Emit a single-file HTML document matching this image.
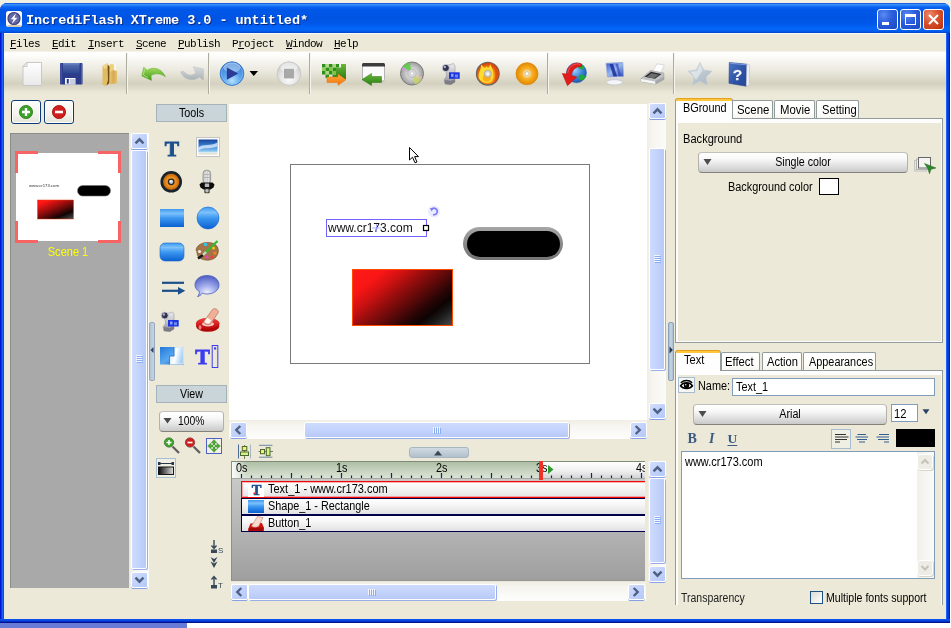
<!DOCTYPE html>
<html><head><meta charset="utf-8"><title>IncrediFlash XTreme 3.0 - untitled*</title>
<style>
*{box-sizing:border-box;margin:0;padding:0}
html,body{width:951px;height:628px;overflow:hidden;background:#fff}
body{position:relative;font-family:"Liberation Sans",sans-serif;font-size:11px;color:#000;line-height:1}
.a{position:absolute}
.t{position:absolute;white-space:nowrap;line-height:14px;height:14px;font-size:12.5px;transform:scaleX(.865);transform-origin:0 0}
.c{position:absolute;white-space:nowrap;line-height:14px;height:14px;font-size:12.5px;transform:scaleX(.865);transform-origin:50% 0;text-align:center}
.mono{font-family:"Liberation Mono",monospace}
svg{position:absolute;overflow:visible}
.trk{position:absolute;background:#f5f4ef}
.sbb{position:absolute;width:17px;height:16px;border:1px solid #fff;border-radius:2px;background:linear-gradient(135deg,#d3defd 0,#c2d2fb 50%,#b5c8f6 100%);box-shadow:0 1px 0 #86a2e4}
.thv{position:absolute;width:16px;border:1px solid #fff;border-radius:2px;background:linear-gradient(90deg,#cddbfd 0,#c3d3fc 50%,#b7c9f6 100%);box-shadow:1px 1px 0 #9aaeea}
.thh{position:absolute;height:16px;border:1px solid #fff;border-radius:2px;background:linear-gradient(180deg,#cddbfd 0,#c3d3fc 50%,#b7c9f6 100%);box-shadow:1px 1px 0 #9aaeea}
.hdr{position:absolute;background:#c9d5d9;border:1px solid #a4b3b9}
.btn{position:absolute;border-radius:4px;border:1px solid #b2b1ab;border-bottom-color:#85817c;border-top-color:#c0bfba;background:linear-gradient(180deg,#ffffff 0,#f9f9f9 30%,#e6e6e6 60%,#c9c9c9 100%)}
.tab{position:absolute;border:1px solid #919b9c;border-bottom:none;border-radius:2px 2px 0 0;background:linear-gradient(180deg,#ffffff 0,#fdfdfb 70%,#f6f5f0 100%)}
.tabsel{position:absolute;border:1px solid #919b9c;border-top:1px solid #e5a01e;border-bottom:none;border-radius:3px 3px 0 0;background:linear-gradient(180deg,#ffc83c 0,#ffc83c 2px,#fefefe 2px)}
.pane{position:absolute;border:1px solid #919b9c;background:#ece9d8;box-shadow:inset 2px 4px 0 #fdfdfd,inset -1px -1px 0 #fdfdfd}
.inp{position:absolute;background:#fff;border:1px solid #7f9db9;font-size:11px}
.sep{position:absolute;width:2px;top:53px;height:41px;border-left:1px solid #aeab9f;border-right:1px solid #f6f5ef}
.row{position:absolute;left:241px;width:420px;height:17px;border:1px solid #00004a;background:linear-gradient(180deg,#ffffff 0,#f6f6f6 40%,#e2e2e4 100%)}
.mi{top:37px;font-size:11px;letter-spacing:-0.6px;text-underline-offset:1px;transform:none;font-family:"Liberation Mono",monospace}
</style></head><body><div id="app" style="position:absolute;left:0;top:0;width:951px;height:628px;will-change:transform">
<!-- backdrop -->
<div class="a" style="left:0;top:0;width:951px;height:12px;background:#f0efe3"></div>
<div class="a" style="left:0;top:623px;width:187px;height:5px;background:#677bd7"></div>
<!-- window frame -->
<div class="a" style="left:0;top:3px;width:950px;height:620px;border-radius:7px 7px 0 0;background:linear-gradient(90deg,#0019cf 0,#0019cf 1px,#0a3cd8 1px,#0a3cd8 2px,#1e62f8 2px,#1e62f8 3px,#0050e0 3px,#0050e0 946px,#1e62f8 946px,#1e62f8 947px,#0a3cd8 947px,#0a3cd8 949px,#0019cf 949px)"></div>
<div class="a" style="left:0;top:619px;width:950px;height:4px;background:linear-gradient(180deg,#0a50ec 0,#0a50ec 1px,#0a46e0 1px,#0a46e0 2px,#0430c8 2px,#0430c8 3px,#00128e 3px)"></div>
<div class="a" style="left:4px;top:33px;width:942px;height:586px;background:#ece9d8"></div>
<!-- title bar -->
<div class="a" style="left:0;top:3px;width:950px;height:30px;border-radius:7px 7px 0 0;background:linear-gradient(180deg,#0845d3 0,#3a90fb 5%,#0a64f2 13%,#0058e8 22%,#0054e3 50%,#0058ea 70%,#0366f8 85%,#0261f2 93%,#0044c8 100%)"></div>
<svg style="left:6px;top:11px" width="16" height="16" viewBox="0 0 16 16"><rect x="0" y="0" width="16" height="16" rx="2.5" fill="#fbfbfb"/><rect x="1" y="14" width="14" height="2" rx="1" fill="#d8c8b0"/><circle cx="8" cy="7.5" r="6" fill="#6468a8"/><circle cx="8" cy="7.5" r="6" fill="none" stroke="#3c4078" stroke-width="1.2"/><path d="M10 2.300 L4.800 8.200 L7.600 8.200 L5.800 13 L11.400 6.800 L8.500 6.800 Z" fill="#fff"/></svg>
<div class="t mono" style="transform:none;left:26px;top:14px;font-size:13.6px;font-weight:bold;color:#fff;letter-spacing:-0.1px;text-shadow:1px 1px 0 #0a2a80">IncrediFlash XTreme 3.0 - untitled*</div>
<!-- caption buttons -->
<div class="a" style="left:877px;top:9px;width:21px;height:21px;border:1px solid #fff;border-radius:3px;background:radial-gradient(circle at 30% 25%,#5a8af0 0,#2a5cdc 45%,#1c48c0 100%)"></div>
<div class="a" style="left:882px;top:22px;width:7px;height:3px;background:#fff"></div>
<div class="a" style="left:900px;top:9px;width:21px;height:21px;border:1px solid #fff;border-radius:3px;background:radial-gradient(circle at 30% 25%,#5a8af0 0,#2a5cdc 45%,#1c48c0 100%)"></div>
<div class="a" style="left:905px;top:14px;width:11px;height:11px;border:1px solid #fff;border-top:3px solid #fff"></div>
<div class="a" style="left:923px;top:9px;width:21px;height:21px;border:1px solid #fff;border-radius:3px;background:radial-gradient(circle at 30% 25%,#ec8a6c 0,#d8502c 45%,#b8300c 100%)"></div>
<svg style="left:923px;top:9px" width="21" height="21" viewBox="0 0 21 21"><path d="M6 6 L15 15 M15 6 L6 15" stroke="#fff" stroke-width="2" stroke-linecap="butt"/></svg>
<!-- menu -->
<div class="a" style="left:4px;top:33px;width:942px;height:19px;background:#ece9d8"></div>
<div class="a" style="left:4px;top:33px;width:942px;height:1px;background:#fbfaf5"></div>
<div class="t mono mi" style="left:10px"><u>F</u>iles</div>
<div class="t mono mi" style="left:52px"><u>E</u>dit</div>
<div class="t mono mi" style="left:88px"><u>I</u>nsert</div>
<div class="t mono mi" style="left:136px"><u>S</u>cene</div>
<div class="t mono mi" style="left:178px"><u>P</u>ublish</div>
<div class="t mono mi" style="left:232px">P<u>r</u>oject</div>
<div class="t mono mi" style="left:286px"><u>W</u>indow</div>
<div class="t mono mi" style="left:334px"><u>H</u>elp</div>
<!-- toolbar bg -->
<div class="a" style="left:4px;top:51px;width:942px;height:1px;background:#f4f2e8"></div>
<div class="a" style="left:4px;top:52px;width:942px;height:42px;background:linear-gradient(180deg,#ffffff 0,#fdfdfb 8%,#f4f3ed 25%,#e9e7dc 48%,#dcd9c9 65%,#d5d1c0 75%,#dedbca 86%,#e8e5d4 94%,#ece9d8 100%)"></div>
<div class="sep" style="left:126px"></div>
<div class="sep" style="left:208px"></div>
<div class="sep" style="left:309px"></div>
<div class="sep" style="left:547px"></div>
<div class="sep" style="left:673px"></div>
<!-- toolbar icons -->
<svg style="left:0;top:0" width="951" height="100" viewBox="0 0 951 100">
<defs>
<linearGradient id="gPaper" x1="0" y1="0" x2="0" y2="1"><stop offset="0" stop-color="#ffffff"/><stop offset="1" stop-color="#e9e9e9"/></linearGradient>
<linearGradient id="gSave" x1="0" y1="0" x2="0" y2="1"><stop offset="0" stop-color="#5a72b4"/><stop offset="1" stop-color="#2c4690"/></linearGradient>
<linearGradient id="gFold" x1="0" y1="0" x2="1" y2="0"><stop offset="0" stop-color="#e8c878"/><stop offset="0.5" stop-color="#d8aa50"/><stop offset="1" stop-color="#e4c070"/></linearGradient>
<linearGradient id="gUndo" x1="0" y1="0" x2="0" y2="1"><stop offset="0" stop-color="#a8e060"/><stop offset="1" stop-color="#3c9818"/></linearGradient>
<linearGradient id="gRedo" x1="0" y1="0" x2="0" y2="1"><stop offset="0" stop-color="#d8dcde"/><stop offset="1" stop-color="#aab0b4"/></linearGradient>
<radialGradient id="gPlay" cx="0.5" cy="0.8" r="0.8"><stop offset="0" stop-color="#b4e2ff"/><stop offset="0.45" stop-color="#5ca6ee"/><stop offset="1" stop-color="#3272cc"/></radialGradient>
<radialGradient id="gStop" cx="0.5" cy="0.75" r="0.75"><stop offset="0" stop-color="#fafafa"/><stop offset="0.6" stop-color="#e0e0e0"/><stop offset="1" stop-color="#c6c6c6"/></radialGradient>
<linearGradient id="gOr" x1="0" y1="0" x2="0" y2="1"><stop offset="0" stop-color="#ffb040"/><stop offset="1" stop-color="#f07008"/></linearGradient>
<linearGradient id="gGr" x1="0" y1="0" x2="0" y2="1"><stop offset="0" stop-color="#68b838"/><stop offset="1" stop-color="#2c7c14"/></linearGradient>
<radialGradient id="gCD" cx="0.5" cy="0.5" r="0.5"><stop offset="0.2" stop-color="#e8e8e8"/><stop offset="0.6" stop-color="#c4c4c4"/><stop offset="1" stop-color="#9c9c9c"/></radialGradient>
<radialGradient id="gGold" cx="0.5" cy="0.5" r="0.5"><stop offset="0.3" stop-color="#fcc040"/><stop offset="0.7" stop-color="#f2a010"/><stop offset="1" stop-color="#e08808"/></radialGradient>
<radialGradient id="gFire" cx="0.5" cy="0.6" r="0.6"><stop offset="0" stop-color="#ffe040"/><stop offset="0.6" stop-color="#f88010"/><stop offset="1" stop-color="#c83808"/></radialGradient>
<radialGradient id="gGlobe" cx="0.4" cy="0.35" r="0.7"><stop offset="0" stop-color="#a0d8ff"/><stop offset="0.6" stop-color="#3a80d8"/><stop offset="1" stop-color="#1c50a8"/></radialGradient>
<linearGradient id="gMon" x1="0" y1="0" x2="1" y2="1"><stop offset="0" stop-color="#3858d0"/><stop offset="0.5" stop-color="#98b8f0"/><stop offset="1" stop-color="#2848b8"/></linearGradient>
<linearGradient id="gCam" x1="0" y1="0" x2="0" y2="1"><stop offset="0" stop-color="#ececf0"/><stop offset="0.6" stop-color="#b8b8c0"/><stop offset="1" stop-color="#84848c"/></linearGradient>
<linearGradient id="gHelp" x1="0" y1="0" x2="1" y2="1"><stop offset="0" stop-color="#4c74c4"/><stop offset="0.6" stop-color="#2c50a4"/><stop offset="1" stop-color="#244494"/></linearGradient>
<linearGradient id="gStar" x1="0" y1="0" x2="0.6" y2="1"><stop offset="0" stop-color="#e0e8ec"/><stop offset="0.5" stop-color="#c0ccd4"/><stop offset="1" stop-color="#b0bcc6"/></linearGradient>
</defs>
<!-- new -->
<path d="M27 62.5 H41.5 V85.5 H23 V66.5 Z" fill="url(#gPaper)" stroke="#c8c8c8" stroke-width="1"/>
<path d="M23 66.5 H27 V62.5 Z" fill="#f4f4f4" stroke="#bdbdbd" stroke-width="0.8"/>
<!-- save -->
<rect x="60" y="63" width="22.500" height="21.500" rx="1" fill="#2c3c8a"/>
<rect x="63" y="63" width="16.500" height="10.500" fill="url(#gSave)"/>
<rect x="63" y="63" width="16.500" height="1.500" fill="#6c84c4"/>
<rect x="60.500" y="63.500" width="1.200" height="20" fill="#4a5ea8"/>
<rect x="81" y="63.500" width="1.200" height="20" fill="#4a5ea8"/>
<rect x="65" y="78" width="10.500" height="6.500" fill="#f2f3f6"/>
<rect x="70" y="79" width="5" height="5.500" fill="#c8cee0"/>
<rect x="66.800" y="79" width="2" height="4.500" fill="#2c3c8a"/>
<!-- folder -->
<path d="M102.500 66 L107.500 63.200 L109 66 L109 82.500 L105.500 86 L102.500 84.500 Z" fill="#e2bc62"/>
<path d="M102.500 66 L107.500 63.200 L108 67 L104.500 69 Z" fill="#f0d48c"/>
<path d="M107.600 65 L109.800 66.500 L109.500 83 L106.500 85.500 L108 80 Z" fill="#6e4e16"/>
<path d="M109.800 64.500 L117 66 L117 83 L109.500 84.500 Z" fill="url(#gFold)"/>
<path d="M113.500 64.300 L116.800 65 L116.800 71 L113.500 70 Z" fill="#fbf7ea"/>
<path d="M109.800 64.500 L113.500 64 L113.500 70 L109.800 72 Z" fill="#ecd07c"/>
<!-- undo -->
<path d="M141.800 75.900 L143.700 67.200 L147.300 70.300 C153 66.300 161.800 68.300 165.400 76.800 C160.500 73.200 155 73 151 75.700 L151.600 80.500 Z" fill="url(#gUndo)" stroke="#62ac30" stroke-width="0.500"/>
<path d="M144.500 69.500 L143.300 75 L148 77.500" fill="none" stroke="#c8f090" stroke-width="0.800" opacity=".8"/>
<!-- redo -->
<path d="M180.500 72 C183 70.300 184.300 72 186.200 73.600 C189 76 193 75.500 195.800 72.800 L193.300 66.800 L203.500 69 L203.500 80.200 L199.300 77.200 C194 81.500 184.500 81 180.500 72 Z" fill="url(#gRedo)" stroke="#b8bec2" stroke-width="0.500"/>
<!-- play -->
<circle cx="232" cy="73.600" r="11.800" fill="url(#gPlay)" stroke="#3c78cc" stroke-width="1"/><circle cx="232" cy="73.600" r="10.600" fill="none" stroke="#8cc4f8" stroke-width="0.800" opacity=".7"/>
<ellipse cx="232" cy="67.500" rx="8.500" ry="5" fill="#fff" opacity=".35"/>
<path d="M226.800 67.500 L238.300 73.600 L226.800 79.700 Z" fill="#2c3a98"/>
<path d="M249.500 71 H258 L253.750 76 Z" fill="#000"/>
<!-- stop -->
<circle cx="289" cy="73.600" r="11.800" fill="url(#gStop)" stroke="#c8c8c8" stroke-width="1"/>
<ellipse cx="289" cy="67.500" rx="8.500" ry="5" fill="#fff" opacity=".5"/>
<rect x="284" y="68.800" width="10" height="9.600" fill="#a8a8a8"/>
<!-- export -->
<g fill="#2f8f1d"><rect x="322" y="64" width="3.500" height="3.500"/><rect x="329" y="64" width="3.500" height="3.500"/><rect x="325.500" y="67.500" width="3.500" height="3.500"/><rect x="322" y="71" width="3.500" height="3.500"/><rect x="329" y="71" width="3.500" height="3.500"/><rect x="325.500" y="74.500" width="3.500" height="3.500"/><rect x="332.500" y="67.500" width="3.500" height="3.500"/><rect x="336" y="64" width="3" height="3.500"/><rect x="332.500" y="74.500" width="4" height="3.500"/></g>
<g fill="#7cc83c"><rect x="325.500" y="64" width="3.500" height="3.500" opacity=".55"/><rect x="322" y="67.500" width="3.500" height="3.500" opacity=".8"/><rect x="329" y="67.500" width="3.500" height="3.500"/><rect x="325.500" y="71" width="3.500" height="3.500" opacity=".5"/><rect x="332.500" y="71" width="3.500" height="3.500"/><rect x="332.500" y="64" width="3.500" height="3.500" opacity=".6"/></g>
<path d="M336 67.500 H341 V64 H346 V79 H336 Z" fill="url(#gGr)"/>
<path d="M327 77 H338 V74 L346 79.700 L338 85.300 V82.500 H327 Z" fill="url(#gOr)" stroke="#e07010" stroke-width="0.500"/>
<!-- window import -->
<rect x="362.500" y="63.500" width="22" height="17.500" rx="1.500" fill="#fbfbfb" stroke="#b4b4b4" stroke-width="1"/>
<path d="M362 66.500 V64.500 Q362 63 363.500 63 H383.500 Q385 63 385 64.500 V66.500 Z" fill="#3c3c3c"/>
<path d="M381.500 76.500 H371.500 V73.500 L362 79.500 L371.500 85.500 V82.500 H381.500 Z" fill="url(#gGr)" stroke="#2c7414" stroke-width="0.500"/>
<!-- cd -->
<circle cx="412" cy="73.500" r="11.500" fill="url(#gCD)" stroke="#7c7c7c" stroke-width="1"/>
<path d="M412 73.500 L403 66.500 A11.500 11.500 0 0 1 409.500 62.300 Z" fill="#58d040" opacity=".85"/>
<path d="M412 73.500 L401.500 70 A11.500 11.500 0 0 1 403 66.500 Z" fill="#c8a0d8" opacity=".6"/>
<path d="M412 73.500 L421 80.500 A11.500 11.500 0 0 1 415 84.600 Z" fill="#c8d860" opacity=".8"/>
<path d="M412 73.500 L422.500 77 A11.500 11.500 0 0 1 421 80.500 Z" fill="#e8c8a0" opacity=".6"/>
<circle cx="412" cy="73.500" r="4.200" fill="#d8d8d8" stroke="#a4a4a4" stroke-width="0.600"/>
<circle cx="412" cy="73.500" r="1.700" fill="#f6f6f6" stroke="#b0b0b0" stroke-width="0.400"/>
<!-- camera -->
<path d="M447 65.500 L453.500 63.500 L455 66 L455 82 L451 84.500 L445 84 L444 80 L446.500 76 L446 71 Z" fill="url(#gCam)" stroke="#8c8c94" stroke-width="0.500"/>
<path d="M445 80 L451 81 L454.500 79 L455 82 L451 84.500 L445 84 Z" fill="#7c7c84"/>
<circle cx="445.800" cy="68" r="3.600" fill="#34344c" stroke="#d0d0d8" stroke-width="0.900"/>
<circle cx="444.800" cy="67" r="1.200" fill="#a8b0d8"/>
<rect x="449" y="72.300" width="10.700" height="6.500" fill="#1c34e0"/>
<rect x="451" y="73.800" width="2.500" height="3" fill="#8ca4fc"/><rect x="455" y="74.500" width="3" height="3" fill="#6c88f4"/>
<!-- fire cd -->
<circle cx="487.800" cy="73.700" r="11.300" fill="url(#gFire)" stroke="#6c6460" stroke-width="1.300"/>
<path d="M487.800 62.400 A11.300 11.300 0 0 1 499.100 73.700 A11.300 11.300 0 0 1 493 83.700 C496 79 496 72 493.500 66.500 C492.500 69 491 70 490.500 67.500 C489.500 65.500 488.500 64 487.800 62.400 Z" fill="#d84810" opacity=".75"/>
<path d="M479 78.500 C477.500 73 481.500 70 481 64.500 C484 67 485 69.500 486.500 66 C488 68.500 489.500 68 490 64 C493.500 69 494.500 76 492 81 C488 84.500 482.500 83.500 479 78.500 Z" fill="#ffe030" opacity=".95"/>
<path d="M483 80 C482 76 485 74 485.500 70.500 C487.500 73 489 73 490 70.500 C492 74.500 491.500 79 489 81.500 C487 82.500 484.500 82 483 80 Z" fill="#ffa018" opacity=".8"/>
<circle cx="487.800" cy="73.700" r="3.600" fill="#d4d0cc" stroke="#a09488" stroke-width="0.600"/>
<circle cx="487.800" cy="73.700" r="1.500" fill="#f8f8f8"/>
<!-- gold cd -->
<circle cx="527" cy="73.700" r="11" fill="url(#gGold)" stroke="#dc8c10" stroke-width="0.800"/>
<circle cx="527" cy="73.700" r="4.600" fill="#f8d488" stroke="#eeb040" stroke-width="0.800"/>
<circle cx="527" cy="73.700" r="2" fill="#fdfdf8" stroke="#b8b0a0" stroke-width="0.600"/>
<!-- globe -->
<circle cx="576.500" cy="72.800" r="10" fill="url(#gGlobe)" stroke="#2c58a8" stroke-width="0.500"/>
<path d="M578 64.500 C581 63.500 584 65.500 584.500 68 C582.500 70 580 69.500 578.500 68 Z M579 75 C582 73.500 585.500 75 585 78 C583 81.500 580 80.500 578.500 78.500 Z" fill="#20a838"/>
<path d="M581.500 64 C575 61 567 65.500 566.500 74 L562.300 73.500 L567.500 85.700 L576.800 77 L571.500 75.500 C572 69.500 576.500 66 581.500 66.500 Z" fill="#e01c1c" stroke="#b41010" stroke-width="0.500"/>
<path d="M580 64.300 C574.500 62.500 568.500 66.500 567.800 73" fill="none" stroke="#f87878" stroke-width="0.800" opacity=".8"/>
<!-- monitor -->
<path d="M606 63.300 L622.800 62.500 L623.500 76.500 L607.500 77 Z" fill="url(#gMon)" stroke="#98a8d8" stroke-width="0.800"/>
<path d="M609.500 64 L613 64 L617 76.300 L613.500 76.500 Z" fill="#1c2c9c" opacity=".85"/>
<path d="M615.500 63.800 L618 63.700 L621 76 L618.800 76.200 Z" fill="#2c3cac" opacity=".6"/>
<path d="M612 77.500 L619 77.200 L620 80.500 L611.500 81 Z" fill="#d4d8e0"/>
<ellipse cx="614.500" cy="82.300" rx="8" ry="2.600" fill="#f4f5f8" stroke="#b8bcc8" stroke-width="0.600"/>
<!-- printer -->
<path d="M652.500 71.500 L657 63.800 L664.300 65 L660.500 73.500 Z" fill="#fdfdfd" stroke="#c8c8c8" stroke-width="0.600"/>
<path d="M641 78.500 L650.500 70.500 L663.800 73 L664 79.500 L655.500 84 L641 81.500 Z" fill="#c0c2c4" stroke="#909294" stroke-width="0.500"/>
<path d="M644.500 76.800 L651 71.800 L661.500 74 L655 78.800 Z" fill="#2c2c2c"/>
<path d="M646.500 77 L651.500 73.300 L659 74.800 L654 78.300 Z" fill="#6c6c6c"/>
<path d="M641 79 L655 81.500 L655.500 84 L641 81.500 Z" fill="#f6f6f6"/>
<path d="M655.500 81 L664 76.500 L664 79.500 L655.500 84 Z" fill="#a4a6a8"/>
<!-- star -->
<path d="M700 62.500 L703.600 70 L712 71.200 L706 77 L707.500 85.300 L700 81.300 L692.500 85.300 L694 77 L688 71.200 L696.400 70 Z" fill="url(#gStar)" stroke="#c4ced6" stroke-width="0.800" stroke-linejoin="round"/>
<path d="M700 64.500 L702.500 70.500 L696 80 L694.500 77.500 L691 72 L697.300 71 Z" fill="#fff" opacity=".45"/>
<!-- help -->
<path d="M729.300 62.500 L746.800 64.200 L746.300 86.200 L729 83.300 Z" fill="url(#gHelp)" stroke="#28448c" stroke-width="0.600"/>
<path d="M729.800 63.200 L746.300 64.800" stroke="#7c9ce0" stroke-width="1"/>
<path d="M746.800 64.200 L749.600 65 L749.200 85.200 L746.300 86.200 Z" fill="#eef0f6" stroke="#b0b8cc" stroke-width="0.500"/>
<text x="737.500" y="80.200" font-family="Liberation Sans, sans-serif" font-weight="bold" font-size="15.500" fill="#fff" text-anchor="middle" stroke="#d8dcec" stroke-width="0.300">?</text>
</svg>
<!-- add / remove scene buttons -->
<div class="a" style="left:11px;top:100px;width:30px;height:24px;border:1px solid #0c3c78;border-radius:3px;background:linear-gradient(180deg,#fdfdfc 0,#f3f2ec 60%,#e6e4da 100%);box-shadow:inset 0 0 0 1px #fff"></div>
<div class="a" style="left:44px;top:100px;width:30px;height:24px;border:1px solid #0c3c78;border-radius:3px;background:linear-gradient(180deg,#fdfdfc 0,#f3f2ec 60%,#e6e4da 100%);box-shadow:inset 0 0 0 1px #fff"></div>
<svg style="left:0;top:96px" width="90" height="32" viewBox="0 96 90 32">
<circle cx="26" cy="112" r="6.600" fill="#3aa028" stroke="#2c7c1c" stroke-width="0.800"/>
<path d="M22 112 H30 M26 108 V116" stroke="#fff" stroke-width="2.400"/>
<circle cx="59" cy="112" r="6.600" fill="#d01c1c" stroke="#a01010" stroke-width="0.800"/>
<path d="M55 112 H63" stroke="#fff" stroke-width="2.600"/>
</svg>
<!-- scene list -->
<div class="a" style="left:10px;top:133px;width:119px;height:455px;background:#a9a9a9;border-left:1px solid #8c8c8c;border-top:1px solid #8c8c8c"></div>
<div class="a" style="left:16px;top:153px;width:104px;height:88px;background:#fff"></div>
<svg style="left:15px;top:151px" width="106" height="92" viewBox="0 0 106 92">
<path d="M1.500 22 V1.500 H23 M83 1.500 H104.500 V22 M104.500 70 V90.500 H83 M23 90.500 H1.500 V70" fill="none" stroke="#f86464" stroke-width="3"/>
<rect x="62.500" y="34.500" width="33" height="10.500" rx="5.200" fill="#000" stroke="#707070" stroke-width="0.600"/>
<defs><linearGradient id="gThumb" x1="0.1" y1="0" x2="0.9" y2="1"><stop offset="0.1" stop-color="#ff1616"/><stop offset="0.45" stop-color="#900c0c"/><stop offset="0.78" stop-color="#120404"/><stop offset="1" stop-color="#444444"/></linearGradient></defs>
<rect x="22.500" y="49" width="36" height="19" fill="url(#gThumb)" stroke="#e84010" stroke-width="0.500"/>
<text x="14" y="36" font-family="Liberation Sans, sans-serif" font-size="4.200" fill="#303030" textLength="30" lengthAdjust="spacingAndGlyphs">www.cr173.com</text>
</svg>
<div class="c" style="left:10px;top:245px;width:116px;color:#ffff00;transform:scaleX(0.882)">Scene 1</div>
<!-- scene list scrollbar -->
<div class="trk" style="left:130px;top:133px;width:19px;height:456px;background:linear-gradient(90deg,#f0eee4,#f6f5f0 30%,#fbfbf9)"></div>
<div class="sbb" style="left:131px;top:133px"></div>
<div class="thv" style="left:131px;top:150px;height:419px"></div>
<div class="sbb" style="left:131px;top:572px"></div>
<svg style="left:0;top:0" width="951" height="628" viewBox="0 0 951 628"><path d="M135.5 143.3 L139.5 139.3 L143.5 143.3" fill="none" stroke="#4d6185" stroke-width="2.4"/><path d="M135.5 577.7 L139.5 581.7 L143.5 577.7" fill="none" stroke="#4d6185" stroke-width="2.4"/><path d="M136 355.5 H142" stroke="#f2f6ff" stroke-width="1"/><path d="M137 356.5 H143" stroke="#8cacf0" stroke-width="1"/><path d="M136 357.5 H142" stroke="#f2f6ff" stroke-width="1"/><path d="M137 358.5 H143" stroke="#8cacf0" stroke-width="1"/><path d="M136 359.5 H142" stroke="#f2f6ff" stroke-width="1"/><path d="M137 360.5 H143" stroke="#8cacf0" stroke-width="1"/><path d="M136 361.5 H142" stroke="#f2f6ff" stroke-width="1"/><path d="M137 362.5 H143" stroke="#8cacf0" stroke-width="1"/></svg>
<!-- splitter left -->
<div class="a" style="left:149px;top:322px;width:6px;height:59px;background:linear-gradient(90deg,#b4c4d4,#c8d4e0);border:1px solid #98a8bc;border-radius:2px"></div>
<svg style="left:149px;top:345px" width="6" height="10" viewBox="0 0 6 10"><path d="M4.500 2 L1.500 5 L4.500 8 Z" fill="#304060"/></svg>
<!-- tools -->
<div class="hdr" style="left:156px;top:104px;width:71px;height:18px"></div><div class="c" style="left:156px;top:105.600px;width:71px;transform:scaleX(0.862)">Tools</div>
<div class="hdr" style="left:156px;top:385px;width:71px;height:18px"></div><div class="c" style="left:156px;top:386.600px;width:71px;transform:scaleX(0.852)">View</div>
<svg style="left:150px;top:130px" width="80" height="350" viewBox="150 130 80 350">
<defs>
<linearGradient id="gBlue" x1="0" y1="0" x2="0" y2="1"><stop offset="0" stop-color="#3c9af0"/><stop offset="0.25" stop-color="#7cc0fc"/><stop offset="0.5" stop-color="#3c98f0"/><stop offset="1" stop-color="#0a60d0"/></linearGradient>
<linearGradient id="gSky" x1="0" y1="0" x2="0" y2="1"><stop offset="0" stop-color="#184498"/><stop offset="0.45" stop-color="#3c84d8"/><stop offset="0.78" stop-color="#8cc8f0"/><stop offset="0.86" stop-color="#d8ecf4"/><stop offset="1" stop-color="#f0d8b8"/></linearGradient>
<radialGradient id="gSpk" cx="0.5" cy="0.5" r="0.5"><stop offset="0" stop-color="#f8a838"/><stop offset="0.6" stop-color="#e88c20"/><stop offset="0.9" stop-color="#c86c10"/><stop offset="1" stop-color="#804008"/></radialGradient>
<radialGradient id="gBub" cx="0.5" cy="0.85" r="0.85"><stop offset="0" stop-color="#f4f6ff"/><stop offset="0.45" stop-color="#a0acec"/><stop offset="1" stop-color="#4c5cc0"/></radialGradient>
<linearGradient id="gRedB" x1="0" y1="0" x2="0" y2="1"><stop offset="0" stop-color="#f04040"/><stop offset="1" stop-color="#c00808"/></linearGradient>
<linearGradient id="gFrmW" x1="0" y1="0" x2="1" y2="0.3"><stop offset="0" stop-color="#c8e0f8"/><stop offset="0.5" stop-color="#ffffff"/><stop offset="1" stop-color="#a8d0f4"/></linearGradient>
<linearGradient id="gFrm" x1="0" y1="0" x2="1" y2="1"><stop offset="0" stop-color="#2078d8"/><stop offset="0.5" stop-color="#58a8f0"/><stop offset="1" stop-color="#1060c0"/></linearGradient>
</defs>
<!-- T -->
<text x="171.800" y="156" font-family="Liberation Serif, serif" font-weight="bold" font-size="21.500" fill="#1c4f8c" stroke="#1c4f8c" stroke-width="0.900" text-anchor="middle">T</text>
<!-- picture -->
<rect x="196.500" y="137.500" width="23" height="19" fill="#fdfdfd" stroke="#c4c4c4" stroke-width="1"/>
<rect x="198.500" y="139.500" width="19" height="15" fill="url(#gSky)"/>
<path d="M198.500 147.500 C203 143.500 210 146.500 217.500 142.500 L217.500 146.500 C211 149.500 205 146.500 198.500 150.500 Z" fill="#e8f2fc" opacity=".75"/>
<!-- speaker -->
<circle cx="171.200" cy="181.800" r="10.800" fill="#18222c"/>
<circle cx="171.200" cy="181.800" r="8.300" fill="url(#gSpk)"/>
<circle cx="171.200" cy="181.800" r="3.400" fill="#2c2420"/>
<circle cx="171.200" cy="181.800" r="2.100" fill="#c4d0e0"/>
<circle cx="170.600" cy="181.200" r="0.900" fill="#fff"/>
<!-- mic -->
<rect x="203" y="170.200" width="7.600" height="13.500" rx="3.400" fill="#c4c4c4" stroke="#8c8c8c" stroke-width="0.800"/>
<path d="M205 172 V183 M206.800 171 V183.500 M208.600 172 V183" stroke="#f6f6f6" stroke-width="0.700"/>
<path d="M204 174.500 H209.600 M204 177.500 H209.600" stroke="#909090" stroke-width="0.500"/>
<path d="M199.500 184.500 L201.500 182.500 L212.500 182.500 L214.500 184.500 L213.500 187.500 L210.500 189.500 L203.500 189.500 L200.500 187.500 Z" fill="#0c0c0c"/>
<rect x="204.800" y="183.500" width="4.400" height="3.500" fill="#b8b8b8"/>
<rect x="204.300" y="188.500" width="5.400" height="4.800" rx="1" fill="#484848"/>
<circle cx="207" cy="190.800" r="1.700" fill="#c0c0c0"/>
<!-- rect -->
<rect x="160" y="209" width="24" height="18" fill="url(#gBlue)"/>
<!-- circle -->
<circle cx="208" cy="218" r="11" fill="url(#gBlue)" stroke="#1c68d0" stroke-width="0.600"/>
<!-- rounded rect -->
<rect x="160" y="243" width="24" height="18" rx="5" fill="url(#gBlue)" stroke="#1c68d0" stroke-width="0.600"/>
<!-- palette -->
<path d="M196 250 C197 244 205 241 212 243 C219 245 220 252 216 257 C212 261 204 261 200 258 C196 256 198 253 196 250 Z" fill="#a47448" stroke="#6c4420" stroke-width="0.600"/>
<circle cx="205.500" cy="244.500" r="1.800" fill="#30c8f0"/><circle cx="213.500" cy="248" r="1.600" fill="#f8c020"/><circle cx="215" cy="253" r="1.600" fill="#f88020"/><circle cx="212" cy="257" r="1.600" fill="#f04040"/><circle cx="207" cy="257" r="1.600" fill="#f040c0"/>
<circle cx="199.500" cy="251.500" r="1.600" fill="#f0ece0"/>
<path d="M217.500 241 L203 255" stroke="#38b830" stroke-width="2.200"/>
<path d="M203 255 L198 258.500" stroke="#181818" stroke-width="2.600"/>
<path d="M206 252 L203 255" stroke="#d0d0d0" stroke-width="2.400"/>
<!-- arrows -->
<path d="M162 282.800 H184" stroke="#1c4f8c" stroke-width="2.200"/>
<path d="M162 290.800 H179" stroke="#1c4f8c" stroke-width="2.200"/>
<path d="M178 287 L185.300 290.800 L178 294.700 Z" fill="#1c4f8c"/>
<!-- bubble -->
<path d="M207 275.500 C214 275.500 219 279.500 219 285 C219 290.500 213.500 294 207 294 C205 294 203.500 293.500 202.500 293 C201 295 199 296.500 197.500 296.500 C199 295 199.500 293 199.500 291.500 C196.500 290 195 287.500 195 285 C195 279.500 200 275.500 207 275.500 Z" fill="url(#gBub)" stroke="#5464c4" stroke-width="0.900"/>
<!-- camera small -->
<path d="M166 314 L172.500 312 L174 314.500 L174 329 L170 331.500 L164 331 L163 327 L165.500 323.500 L165 319 Z" fill="url(#gCam)" stroke="#8c8c94" stroke-width="0.500"/>
<path d="M164 327 L170 328 L173.500 326 L174 329 L170 331.500 L164 331 Z" fill="#7c7c84"/>
<circle cx="164.800" cy="315.500" r="3.500" fill="#34344c" stroke="#d0d0d8" stroke-width="0.900"/>
<circle cx="163.800" cy="314.500" r="1.200" fill="#a8b0d8"/>
<rect x="168" y="320" width="10.700" height="6.500" fill="#1c34e0"/>
<rect x="170" y="321.500" width="2.500" height="3" fill="#8ca4fc"/><rect x="174" y="322.200" width="3" height="3" fill="#6c88f4"/>
<!-- button press -->
<ellipse cx="207.700" cy="326.500" rx="11.500" ry="5.200" fill="#b00808"/>
<rect x="196.200" y="323.300" width="23" height="3.200" fill="#c40c0c"/>
<ellipse cx="207.700" cy="323.300" rx="11.500" ry="5" fill="url(#gRedB)" stroke="#d01818" stroke-width="0.500"/>
<ellipse cx="208" cy="324" rx="6" ry="2.400" fill="#fff" opacity=".75"/>
<ellipse cx="200" cy="327.500" rx="1.500" ry="2.200" fill="#ff9c9c" opacity=".8"/>
<path d="M203.800 321.500 L212.500 309.500 C214.500 307.500 218.800 309.500 218.200 312.500 L211 323.500 C208.500 325.500 203.500 324.500 203.800 321.500 Z" fill="#f0b098" stroke="#b46c54" stroke-width="0.700"/>
<path d="M204.500 321.300 L207.300 317.500 C208.500 318.500 210 319.500 211.300 320.200 L209.500 323.200 C207.500 324 205 323 204.500 321.300 Z" fill="#fdf4f0"/>
<!-- frames -->
<rect x="160" y="347" width="24" height="17.500" fill="url(#gFrm)"/>
<path d="M174.500 347.500 H183.500 V364 H170 V356.500 H174.500 Z" fill="url(#gFrmW)" stroke="#e8f2fc" stroke-width="0.800"/>
<path d="M174 347 V356 H169.500 V364.500" fill="none" stroke="#1868c8" stroke-width="0.700"/>
<!-- T i -->
<text x="202.500" y="364.300" font-family="Liberation Serif, serif" font-weight="bold" font-size="22" fill="#3c3cf0" stroke="#3c3cf0" stroke-width="0.800" text-anchor="middle">T</text>
<rect x="212.200" y="345.500" width="5.600" height="22" fill="none" stroke="#3c3cf0" stroke-width="1"/>
<rect x="214" y="347.300" width="2.200" height="2.200" fill="#3c3cf0"/>
<!-- zoom in -->
<path d="M172.500 446.500 L179 453" stroke="#606060" stroke-width="2.300"/>
<circle cx="169" cy="442.500" r="4.600" fill="#3ca42c" stroke="#4c8040" stroke-width="1"/>
<path d="M166.500 442.500 H171.500 M169 440 V445" stroke="#fff" stroke-width="1.500"/>
<!-- zoom out -->
<path d="M193.500 446.500 L200 453" stroke="#606060" stroke-width="2.300"/>
<circle cx="190" cy="442.500" r="4.600" fill="#d01c1c" stroke="#984040" stroke-width="1"/>
<path d="M187.500 442.500 H192.500" stroke="#fff" stroke-width="1.700"/>
<!-- fit -->
<rect x="206.500" y="438.500" width="15" height="15" fill="#f0f2e8" stroke="#5060c8" stroke-width="1"/>
<g fill="#4ca838" stroke="#3c8828" stroke-width="0.300">
<path d="M214 439.500 L217 443 H215 V445 H213 V443 H211 Z"/>
<path d="M214 452.500 L217 449 H215 V447 H213 V449 H211 Z"/>
<path d="M207.500 446 L211 443 V445 H213 V447 H211 V449 Z"/>
<path d="M220.500 446 L217 443 V445 H215 V447 H217 V449 Z"/>
</g>
<!-- ruler icon -->
<rect x="156.500" y="458.500" width="19" height="19" fill="#eeeee4" stroke="#a8c0d0" stroke-width="1"/>
<path d="M159 463.500 H173" stroke="#283848" stroke-width="1"/>
<rect x="158" y="462" width="2.500" height="3" fill="#283848"/><rect x="171.500" y="462" width="2.500" height="3" fill="#283848"/>
<defs><linearGradient id="gBW" x1="0" y1="0" x2="1" y2="0"><stop offset="0" stop-color="#080808"/><stop offset="1" stop-color="#e0e0e0"/></linearGradient></defs>
<rect x="158.500" y="467" width="15" height="7.500" fill="url(#gBW)" stroke="#181818" stroke-width="1"/>
</svg>
<div class="btn" style="left:159px;top:411px;width:65px;height:21px"></div><div class="t" style="left:178px;top:413.600px;transform:scaleX(0.827)">100%</div>
<svg style="left:163px;top:417px" width="10" height="8" viewBox="0 0 10 8"><path d="M0.500 1 H8.500 L4.500 6.500 Z" fill="#484848"/></svg>
<!-- layer order icons -->
<svg style="left:208px;top:536px" width="20" height="56" viewBox="208 536 20 56">
<path d="M214 540 V548 M211.500 545.500 L214 548.500 L216.500 545.500" stroke="#384858" stroke-width="1.400" fill="none"/>
<rect x="211" y="549.500" width="6" height="3.500" fill="#384858"/>
<text x="218" y="553" font-family="Liberation Sans, sans-serif" font-size="8" fill="#384858">S</text>
<path d="M210.500 557 L214 559 L217.500 557 L214 563 Z M210.500 561.500 L214 563.500 L217.500 561.500 L214 568 Z" fill="#384858"/>
<path d="M214 586 V577 M211.500 579.500 L214 576.500 L216.500 579.500" stroke="#384858" stroke-width="1.400" fill="none"/>
<rect x="211" y="585" width="6" height="3.500" fill="#384858"/>
<text x="218" y="588" font-family="Liberation Sans, sans-serif" font-size="8" fill="#384858">T</text>
</svg>
<!-- stage area -->
<div class="a" style="left:229px;top:104px;width:418px;height:316px;background:#fff"></div>
<div class="a" style="left:290px;top:164px;width:300px;height:200px;border:1px solid #7a7a7a;background:#fff"></div>
<!-- text object -->
<div class="a" style="left:326px;top:219px;width:101px;height:18px;border:1px solid #6f62ff"></div>
<div class="t" style="transform:none;left:328px;top:221px;font-size:12px;color:#111">www.cr173.com</div>
<svg style="left:370px;top:205px" width="70" height="32" viewBox="370 205 70 32">
<path d="M372 228 H381 M376.500 224 V232" stroke="#9aa0ff" stroke-width="0.800"/>
<rect x="423.500" y="225.500" width="5" height="5" fill="#fff" stroke="#000" stroke-width="1.200"/>
<circle cx="434" cy="211.500" r="6" fill="#e4e4ff" opacity=".7"/>
<path d="M431.500 209.500 A3.200 3.200 0 1 1 433 214.500" fill="none" stroke="#7878f8" stroke-width="1.500"/>
<path d="M430 208 L433.500 208.500 L431.500 211.500 Z" fill="#7878f8"/>
</svg>
<!-- pill button -->
<div class="a" style="left:463px;top:227px;width:100px;height:33px;border-radius:17px;background:linear-gradient(180deg,#a6a6a6 0,#8a8a8a 50%,#747474 100%)"></div>
<div class="a" style="left:466.500px;top:230.500px;width:93px;height:26px;border-radius:13px;background:#000"></div>
<!-- gradient rect -->
<div class="a" style="left:352px;top:269px;width:101px;height:57px;border:1px solid #ff4a00;background:linear-gradient(142deg,#ff1a1a 0,#fb1616 18%,#cc1111 32%,#960d0d 44%,#5e0909 58%,#2a0505 70%,#0e0303 79%,#1a1a1a 87%,#4a4a4a 100%)"></div>
<!-- mouse cursor -->
<svg style="left:408px;top:146px" width="14" height="20" viewBox="0 0 14 20"><path d="M1.500 1.500 V14 L4.500 11.200 L7 16.800 L9 16 L6.600 10.600 H10.500 Z" fill="#fff" stroke="#000" stroke-width="1" stroke-linejoin="miter"/></svg>
<!-- stage vertical scrollbar -->
<div class="trk" style="left:647px;top:103px;width:19px;height:317px;background:linear-gradient(90deg,#f0eee4,#f6f5f0 30%,#fbfbf9)"></div>
<div class="sbb" style="left:649px;top:103px"></div>
<div class="thv" style="left:649px;top:148px;height:222px"></div>
<div class="sbb" style="left:649px;top:403px"></div>
<svg style="left:0;top:0" width="951" height="628" viewBox="0 0 951 628"><path d="M653.5 113.3 L657.5 109.3 L661.5 113.3" fill="none" stroke="#4d6185" stroke-width="2.4"/><path d="M653.5 408.7 L657.5 412.7 L661.5 408.7" fill="none" stroke="#4d6185" stroke-width="2.4"/><path d="M654 255.5 H660" stroke="#f2f6ff" stroke-width="1"/><path d="M655 256.5 H661" stroke="#8cacf0" stroke-width="1"/><path d="M654 257.5 H660" stroke="#f2f6ff" stroke-width="1"/><path d="M655 258.5 H661" stroke="#8cacf0" stroke-width="1"/><path d="M654 259.5 H660" stroke="#f2f6ff" stroke-width="1"/><path d="M655 260.5 H661" stroke="#8cacf0" stroke-width="1"/><path d="M654 261.5 H660" stroke="#f2f6ff" stroke-width="1"/><path d="M655 262.5 H661" stroke="#8cacf0" stroke-width="1"/></svg>
<!-- stage horizontal scrollbar -->
<div class="trk" style="left:229px;top:420px;width:418px;height:19px;background:linear-gradient(180deg,#f0eee4,#f6f5f0 30%,#fdfdfc)"></div>
<div class="sbb" style="left:230px;top:422px"></div>
<div class="thh" style="left:304px;top:422px;width:265px"></div>
<div class="sbb" style="left:630px;top:422px"></div>
<svg style="left:0;top:0" width="951" height="628" viewBox="0 0 951 628"><path d="M240.3 426 L236.3 430 L240.3 434" fill="none" stroke="#4d6185" stroke-width="2.4"/><path d="M635.7 426 L639.7 430 L635.7 434" fill="none" stroke="#4d6185" stroke-width="2.4"/><path d="M433.5 427 V433" stroke="#f2f6ff" stroke-width="1"/><path d="M434.5 428 V434" stroke="#8cacf0" stroke-width="1"/><path d="M435.5 427 V433" stroke="#f2f6ff" stroke-width="1"/><path d="M436.5 428 V434" stroke="#8cacf0" stroke-width="1"/><path d="M437.5 427 V433" stroke="#f2f6ff" stroke-width="1"/><path d="M438.5 428 V434" stroke="#8cacf0" stroke-width="1"/><path d="M439.5 427 V433" stroke="#f2f6ff" stroke-width="1"/><path d="M440.5 428 V434" stroke="#8cacf0" stroke-width="1"/></svg>
<!-- timeline toolbar -->
<svg style="left:236px;top:443px" width="40" height="18" viewBox="236 443 40 18">
<path d="M238.500 444.500 V458.500" stroke="#4c6c98" stroke-width="1"/><path d="M250.500 444.500 V458.500" stroke="#a8b4c0" stroke-width="1"/>
<path d="M244.500 445 V459" stroke="#4c6830" stroke-width="0.800"/>
<rect x="242.300" y="446.500" width="4.500" height="4" fill="#eef078" stroke="#4c6830" stroke-width="1"/>
<rect x="240.500" y="452" width="8" height="3.500" fill="#d8f088" stroke="#4c6830" stroke-width="1"/>
<path d="M259 445.300 H272.500 M259 457.200 H272.500" stroke="#6c88a8" stroke-width="1"/>
<path d="M258.500 451.500 H273" stroke="#4c6830" stroke-width="0.800"/>
<rect x="260.500" y="449.500" width="4" height="4.200" fill="#eef078" stroke="#4c6830" stroke-width="1"/>
<rect x="266.300" y="447.700" width="3.700" height="8" fill="#d8f088" stroke="#4c6830" stroke-width="1"/>
</svg>
<div class="a" style="left:409px;top:447px;width:60px;height:11px;border:1px solid #a8b6c2;border-radius:3px;background:linear-gradient(180deg,#d0dae2,#b2c0cc)"></div>
<svg style="left:432px;top:449px" width="12" height="8" viewBox="0 0 12 8"><path d="M2 6.500 H10 L6 1.500 Z" fill="#3a4858"/></svg>
<div class="a" id="tlclip" style="left:0;top:0;width:645px;height:628px;overflow:hidden">
<!-- timeline body -->
<div class="a" style="left:231px;top:461px;width:415px;height:120px;background:linear-gradient(180deg,#d0d0d0 0,#c8c8c8 16%,#b4b4b4 58%,#9f9f9f 100%);border-left:1px solid #8e8e8e;border-bottom:1px solid #969696"></div>
<!-- ruler -->
<div class="a" style="left:232px;top:461px;width:414px;height:18px;background:linear-gradient(180deg,#aebfa6 0,#c3d0bb 45%,#dbe3d5 100%);border-top:1px solid #7c8c78;border-bottom:1px solid #a0a8a0"></div>
<div class="a" style="left:232px;top:462px;width:14px;height:16px;background:linear-gradient(90deg,#fbfbfb,rgba(255,255,255,0))"></div>
<div class="a" style="left:543px;top:462px;width:103px;height:16px;background:linear-gradient(180deg,#fefefe 0,#f0f0f0 55%,#d4d4d4 100%)"></div>
<div class="t" style="left:536px;top:460.600px;font-size:12px;transform:scaleX(.9)">3s</div>
<div class="t" style="left:636px;top:460.600px;font-size:12px;transform:scaleX(.9)">4s</div>
<div class="a" style="left:539px;top:461px;width:4px;height:19px;background:#f03228"></div>
<svg style="left:232px;top:461px" width="414" height="19" viewBox="232 461 414 19">
<path id="tk" d="M241.500 474 V478 M251.500 475.500 V478 M261.500 475.500 V478 M271.500 475.500 V478 M281.500 475.500 V478 M291.500 473 V478 M301.500 475.500 V478 M311.500 475.500 V478 M321.500 475.500 V478 M331.500 475.500 V478 M341.500 473 V478 M351.500 475.500 V478 M361.500 475.500 V478 M371.500 475.500 V478 M381.500 475.500 V478 M391.500 473 V478 M401.500 475.500 V478 M411.500 475.500 V478 M421.500 475.500 V478 M431.500 475.500 V478 M441.500 473 V478 M451.500 475.500 V478 M461.500 475.500 V478 M471.500 475.500 V478 M481.500 475.500 V478 M491.500 473 V478 M501.500 475.500 V478 M511.500 475.500 V478 M521.500 475.500 V478 M531.500 475.500 V478 M551.500 475.500 V478 M561.500 475.500 V478 M571.500 475.500 V478 M581.500 475.500 V478 M591.500 473 V478 M601.500 475.500 V478 M611.500 475.500 V478 M621.500 475.500 V478 M631.500 475.500 V478 M641.500 473 V478" stroke="#10207c" stroke-width="1.200" fill="none"/>
<path d="M548 465 L553.500 469.500 L548 474 Z" fill="#2c9a2c"/>
</svg>
<div class="t" style="left:236px;top:460.600px;font-size:12px;transform:scaleX(.9)">0s</div>
<div class="t" style="left:336px;top:460.600px;font-size:12px;transform:scaleX(.9)">1s</div>
<div class="t" style="left:436px;top:460.600px;font-size:12px;transform:scaleX(.9)">2s</div>
<!-- rows -->
<div class="row" style="top:481px;border:1px solid #f00808;box-shadow:inset 0 0 0 1px rgba(255,40,40,.35)"></div><div class="t" style="left:268px;top:482.400px;transform:scaleX(0.879)">Text_1 - www.cr173.com</div>
<div class="row" style="top:498px"></div><div class="t" style="left:268px;top:499.400px;transform:scaleX(0.866)">Shape_1 - Rectangle</div>
<div class="row" style="top:515px"></div><div class="t" style="left:268px;top:516.400px;transform:scaleX(0.867)">Button_1</div>
<svg style="left:246px;top:482px" width="20" height="50" viewBox="246 482 20 50">
<rect x="248" y="483" width="16" height="14" fill="#fff"/>
<text x="256.500" y="494.800" font-family="Liberation Serif, serif" font-weight="bold" font-size="14.500" fill="#1c4f8c" stroke="#1c4f8c" stroke-width="0.600" text-anchor="middle">T</text><rect x="253.500" y="492.500" width="1.500" height="1.500" fill="#e02020"/>
<rect x="248" y="500" width="16" height="13" fill="url(#gBlue)"/>
<path d="M248 529.500 L250.500 523.500 L262 523 L264 528 L263.500 531 H248.500 Z" fill="#cc1414"/><path d="M249 528 L263.500 527.500 L263.500 531 H248.500 Z" fill="#a80808"/>
<path d="M251.500 526 L257.500 516.500 L263 517.500 L258.500 526.500 C256 527.500 253 527.500 251.500 526 Z" fill="#f8dcd0" stroke="#c87868" stroke-width="0.600"/>
</svg>
</div>
<!-- timeline vertical scrollbar -->
<div class="trk" style="left:648px;top:461px;width:18px;height:122px;background:linear-gradient(90deg,#f0eee4,#f6f5f0 30%,#fbfbf9)"></div>
<div class="sbb" style="left:649px;top:461px"></div>
<div class="thv" style="left:649px;top:478px;height:85px"></div>
<div class="sbb" style="left:649px;top:566px"></div>
<svg style="left:0;top:0" width="951" height="628" viewBox="0 0 951 628"><path d="M653.5 471.3 L657.5 467.3 L661.5 471.3" fill="none" stroke="#4d6185" stroke-width="2.4"/><path d="M653.5 571.7 L657.5 575.7 L661.5 571.7" fill="none" stroke="#4d6185" stroke-width="2.4"/><path d="M654 516.5 H660" stroke="#f2f6ff" stroke-width="1"/><path d="M655 517.5 H661" stroke="#8cacf0" stroke-width="1"/><path d="M654 518.5 H660" stroke="#f2f6ff" stroke-width="1"/><path d="M655 519.5 H661" stroke="#8cacf0" stroke-width="1"/><path d="M654 520.5 H660" stroke="#f2f6ff" stroke-width="1"/><path d="M655 521.5 H661" stroke="#8cacf0" stroke-width="1"/><path d="M654 522.5 H660" stroke="#f2f6ff" stroke-width="1"/><path d="M655 523.5 H661" stroke="#8cacf0" stroke-width="1"/></svg>
<!-- timeline horizontal scrollbar -->
<div class="trk" style="left:231px;top:582px;width:415px;height:19px;background:linear-gradient(180deg,#f0eee4,#f6f5f0 30%,#fdfdfc)"></div>
<div class="sbb" style="left:231px;top:584px"></div>
<div class="thh" style="left:248px;top:584px;width:248px"></div>
<div class="sbb" style="left:628px;top:584px"></div>
<svg style="left:0;top:0" width="951" height="628" viewBox="0 0 951 628"><path d="M241.3 588 L237.3 592 L241.3 596" fill="none" stroke="#4d6185" stroke-width="2.4"/><path d="M633.7 588 L637.7 592 L633.7 596" fill="none" stroke="#4d6185" stroke-width="2.4"/><path d="M368.5 589 V595" stroke="#f2f6ff" stroke-width="1"/><path d="M369.5 590 V596" stroke="#8cacf0" stroke-width="1"/><path d="M370.5 589 V595" stroke="#f2f6ff" stroke-width="1"/><path d="M371.5 590 V596" stroke="#8cacf0" stroke-width="1"/><path d="M372.5 589 V595" stroke="#f2f6ff" stroke-width="1"/><path d="M373.5 590 V596" stroke="#8cacf0" stroke-width="1"/><path d="M374.5 589 V595" stroke="#f2f6ff" stroke-width="1"/><path d="M375.5 590 V596" stroke="#8cacf0" stroke-width="1"/></svg>
<!-- right splitter -->
<div class="a" style="left:668px;top:322px;width:6px;height:59px;background:linear-gradient(90deg,#a8c0d4,#c4d6e4 50%,#a8bcd0);border:1px solid #8ca0b8;border-radius:2px"></div>
<svg style="left:668px;top:345px" width="6" height="10" viewBox="0 0 6 10"><path d="M1.500 1.500 L4.800 5 L1.500 8.500 Z" fill="#283850"/></svg>
<!-- upper tab panel -->
<div class="pane" style="left:675px;top:118px;width:268px;height:225px"></div>
<div class="tab" style="left:732px;top:100px;width:41px;height:18px"></div><div class="t" style="left:737px;top:102.600px;transform:scaleX(0.912)">Scene</div>
<div class="tab" style="left:774px;top:100px;width:41px;height:18px"></div><div class="t" style="left:779.500px;top:102.600px;transform:scaleX(0.906)">Movie</div>
<div class="tab" style="left:816px;top:100px;width:43px;height:18px"></div><div class="t" style="left:822px;top:102.600px;transform:scaleX(0.892)">Setting</div>
<div class="tabsel" style="left:675px;top:98px;width:58px;height:21px"></div><div class="a" style="left:676px;top:118px;width:56px;height:5px;background:#fefefe"></div><div class="t" style="left:683px;top:100.600px;transform:scaleX(0.871)">BGround</div>
<div class="t" style="left:683px;top:131.600px;transform:scaleX(0.888)">Background</div>
<div class="btn" style="left:698px;top:152px;width:210px;height:21px"></div><div class="c" style="left:698px;top:154.600px;width:210px;transform:scaleX(0.852)">Single color</div>
<svg style="left:703px;top:158px" width="10" height="8" viewBox="0 0 10 8"><path d="M0.500 1 H8.500 L4.500 7 Z" fill="#4c4c4c"/></svg>
<svg style="left:914px;top:154px" width="24" height="22" viewBox="0 0 24 22">
<rect x="0.500" y="6.500" width="12" height="10.500" fill="#e4e4e0" stroke="#c4c4c0" stroke-width="1"/>
<rect x="2.500" y="5" width="12" height="10.500" fill="#ececea" stroke="#b4b4b0" stroke-width="1"/>
<rect x="4.500" y="3.500" width="12" height="10.500" fill="#f4f4f2" stroke="#686868" stroke-width="1"/>
<path d="M10.500 9.500 L22 14 L17 15.300 L15.500 19.800 L13.800 14.500 Z" fill="#2c842c" stroke="#1c6c1c" stroke-width="0.500"/>
</svg>
<div class="t" style="left:727.500px;top:179.600px;transform:scaleX(0.87)">Background color</div>
<div class="a" style="left:819px;top:178px;width:20px;height:17px;background:#fff;border:1px solid #000"></div>
<!-- lower tab panel -->
<div class="pane" style="left:675px;top:370px;width:268px;height:235px;border-bottom:none;box-shadow:inset 2px 4px 0 #fdfdfd,inset -1px 0 0 #fdfdfd"></div>
<div class="tab" style="left:721px;top:352px;width:39px;height:18px"></div><div class="t" style="left:725px;top:354.600px;transform:scaleX(0.903)">Effect</div>
<div class="tab" style="left:762px;top:352px;width:40px;height:18px"></div><div class="t" style="left:766.500px;top:354.600px;transform:scaleX(0.891)">Action</div>
<div class="tab" style="left:803px;top:352px;width:73px;height:18px"></div><div class="t" style="left:808.500px;top:354.600px;transform:scaleX(0.87)">Appearances</div>
<div class="tabsel" style="left:675px;top:350px;width:46px;height:21px"></div><div class="a" style="left:676px;top:370px;width:44px;height:5px;background:#fefefe"></div><div class="t" style="left:684px;top:352.600px;transform:scaleX(0.891)">Text</div>
<div class="a" style="left:678px;top:377px;width:17px;height:16px;border:1px solid #a8bcd0;background:#f4f6f4"></div>
<svg style="left:678px;top:377px" width="17" height="16" viewBox="0 0 17 16"><path d="M2.500 8.800 C5 4.800 12 4.800 14.500 8.800 C12 12.300 5 12.300 2.500 8.800 Z" fill="#fff" stroke="#000" stroke-width="1.500"/><circle cx="8.500" cy="8.500" r="2.700" fill="#000"/><circle cx="7.800" cy="7.800" r="0.700" fill="#fff"/><path d="M2.800 5.800 C6 2.800 11 2.800 14.200 5.800" fill="none" stroke="#000" stroke-width="1.400"/></svg>
<div class="t" style="left:698px;top:378.600px;transform:scaleX(.87)">Name:</div>
<div class="inp" style="left:732px;top:378px;width:203px;height:18px"></div><div class="t" style="left:735.500px;top:380px;transform:scaleX(0.869)">Text_1</div>
<div class="btn" style="left:693px;top:404px;width:194px;height:21px"></div><div class="c" style="left:693px;top:406.600px;width:194px;transform:scaleX(0.862)">Arial</div>
<svg style="left:698px;top:410px" width="10" height="8" viewBox="0 0 10 8"><path d="M0.500 1 H8.500 L4.500 7 Z" fill="#4c4c4c"/></svg>
<div class="inp" style="left:891px;top:404px;width:27px;height:18px"></div><div class="t" style="left:894px;top:406.600px;transform:scaleX(0.9)">12</div>
<svg style="left:922px;top:408px" width="10" height="8" viewBox="0 0 10 8"><path d="M0.500 1.300 H7.500 L4 6.300 Z" fill="#2c4468"/></svg>
<div class="t" style="transform:none;left:687.500px;top:432px;font-family:'Liberation Serif',serif;font-weight:bold;font-size:14px;color:#3c5a82">B</div>
<div class="t" style="transform:none;left:709px;top:432px;font-family:'Liberation Serif',serif;font-weight:bold;font-style:italic;font-size:14px;color:#3c5a82">I</div>
<div class="t" style="transform:none;left:727.500px;top:432px;font-family:'Liberation Serif',serif;font-weight:bold;font-size:13.500px;color:#3c5a82;text-decoration:underline;text-underline-offset:2px">U</div>
<div class="a" style="left:831px;top:429px;width:20px;height:20px;border:1px solid #a8bcd0;background:#f0efe4"></div>
<svg style="left:830px;top:428px" width="64" height="22" viewBox="830 428 64 22">
<path d="M835 434.500 H846 M835 437 H848.500 M835 439.500 H847 M835 442 H840" stroke="#303030" stroke-width="1.200"/>
<path d="M857.500 434.500 H866 M855.500 437 H868 M857 439.500 H867 M859 442 H865" stroke="#306090" stroke-width="1.200"/>
<path d="M879 434.500 H889 M876.500 437 H889 M878 439.500 H889 M884 442 H889" stroke="#306090" stroke-width="1.200"/>
</svg>
<div class="a" style="left:896px;top:429px;width:39px;height:18px;background:#000"></div>
<div class="inp" style="left:681px;top:451px;width:254px;height:128px"></div>
<div class="t" style="left:685px;top:454.600px;transform:scaleX(0.879)">www.cr173.com</div>
<div class="a" style="left:917px;top:452px;width:17px;height:126px;background:linear-gradient(90deg,#f1f0ea,#fbfbf8)"></div>
<div class="a" style="left:917px;top:454px;width:16px;height:16px;border:1px solid #fff;border-radius:3px;background:#eeede5;box-shadow:1px 1px 0 #d8d6ca"></div>
<div class="a" style="left:917px;top:560px;width:16px;height:16px;border:1px solid #fff;border-radius:3px;background:#eeede5;box-shadow:1px 1px 0 #d8d6ca"></div>
<svg style="left:917px;top:453px" width="17" height="124" viewBox="0 0 17 124">
<path d="M4.500 10.500 L8 7 L11.500 10.500" fill="none" stroke="#c4c2b8" stroke-width="2"/>
<path d="M4.500 113 L8 116.500 L11.500 113" fill="none" stroke="#c4c2b8" stroke-width="2"/>
</svg>
<div class="t" style="left:681px;top:590.600px;color:#222;transform:scaleX(0.839)">Transparency</div>
<div class="a" style="left:810px;top:591px;width:13px;height:13px;border:1px solid #1c5180;background:linear-gradient(135deg,#dcdcd4,#fff)"></div>
<div class="t" style="left:825.500px;top:590.600px;transform:scaleX(0.846)">Multiple fonts support</div>
</div></body></html>
